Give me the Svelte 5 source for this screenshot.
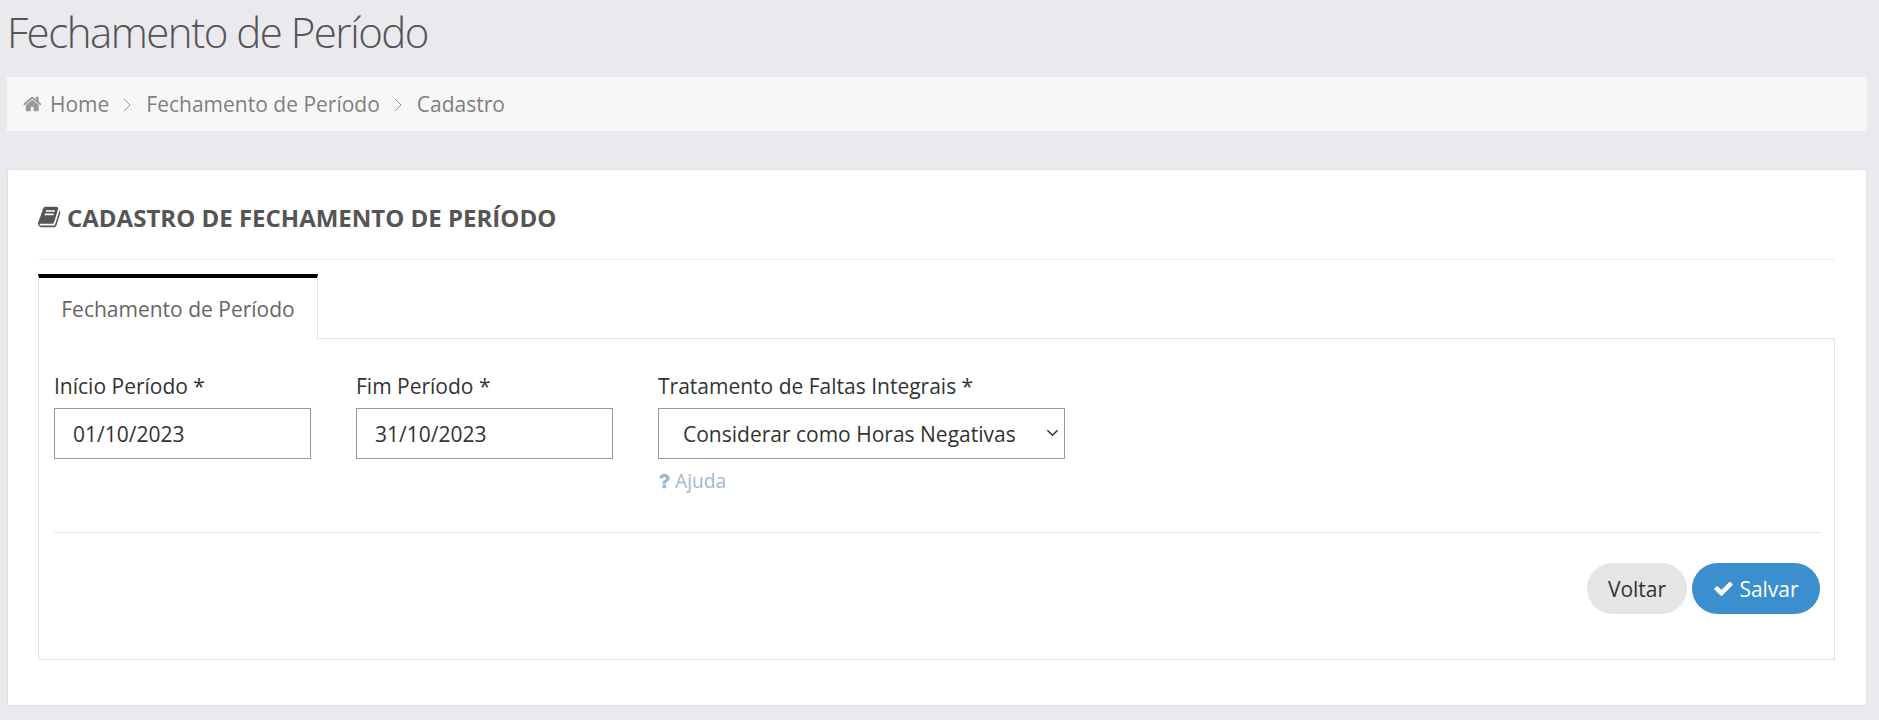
<script>
  let inicio = $state('01/10/2023');
  let fim = $state('31/10/2023');
  let tratamento = $state('negativas');
</script>

<main>
  <h1>Fechamento de Período</h1>

  <nav class="breadcrumb">
    <svg class="home" viewBox="0 0 1792 1792"><path fill="currentColor" d="M1408 992v480q0 26-19 45t-45 19h-384v-384h-256v384h-384q-26 0-45-19t-19-45v-480q0-1 .5-3t.5-3l575-474 575 474q1 2 1 6zm223-69l-62 74q-8 9-21 11h-3q-13 0-21-7l-692-577-692 577q-12 8-24 7-13-2-21-11l-62-74q-8-10-7-23.5t11-21.5l719-599q32-26 76-26t76 26l244 204v-195q0-14 9-23t23-9h192q14 0 23 9t9 23v408l219 182q10 8 11 21.5t-7 23.5z"/></svg>
    <span>Home</span>
    <svg class="sep" viewBox="0 0 8 14"><path d="M1 1l6 6-6 6" fill="none" stroke="currentColor"/></svg>
    <span>Fechamento de Período</span>
    <svg class="sep" viewBox="0 0 8 14"><path d="M1 1l6 6-6 6" fill="none" stroke="currentColor"/></svg>
    <span>Cadastro</span>
  </nav>

  <section class="card">
    <h2>
      <svg viewBox="0 0 1792 1792"><path fill="currentColor" d="M1639 478q40 57 18 129l-275 906q-19 64-76.5 107.5t-122.5 43.5h-923q-77 0-148.5-53.5t-99.5-131.5q-24-67-2-127 0-4 3-27t4-37q1-8-3-21.5t-3-19.5q2-11 8-21t16.5-23.5 16.5-23.5q23-38 45-91.5t30-91.5q3-10 .5-30t-.5-28q3-11 17-28t17-23q21-36 42-92t25-90q1-9-2.5-32t.5-28q4-13 22-30.5t22-22.5q19-26 42.5-84.5t27.5-96.5q1-8-3-25.5t-2-26.5q2-8 9-18t18-23 17-21q8-12 16.5-30.5t15-35 16-36 19.5-32 26.5-23.5 36-11.5 47.5 5.5l-1 3q38-9 51-9h761q74 0 114 56t18 130l-274 906q-36 119-71.5 153.5t-128.5 34.5h-869q-27 0-38 15-11 16-1 43 24 70 144 70h923q29 0 56-15.5t35-41.5l300-987q7-22 5-57 38 15 59 43zm-1064 2q-4 13 2 22.5t20 9.5h608q13 0 25.5-9.5t16.5-22.5l21-64q4-13-2-22.5t-20-9.5h-608q-13 0-25.5 9.5t-16.5 22.5zm-83 256q-4 13 2 22.5t20 9.5h608q13 0 25.5-9.5t16.5-22.5l21-64q4-13-2-22.5t-20-9.5h-608q-13 0-25.5 9.5t-16.5 22.5z"/></svg>
      CADASTRO DE FECHAMENTO DE PERÍODO
    </h2>

    <div class="tabs">
      <button type="button" class="tab">Fechamento de Período</button>
    </div>

    <form class="panel" onsubmit={(e) => e.preventDefault()}>
      <div class="fields">
        <div class="field small">
          <label for="inicio">Início Período *</label>
          <input id="inicio" type="text" bind:value={inicio} />
        </div>
        <div class="field small">
          <label for="fim">Fim Período *</label>
          <input id="fim" type="text" bind:value={fim} />
        </div>
        <div class="field wide">
          <label for="tratamento">Tratamento de Faltas Integrais *</label>
          <div class="select-wrap">
            <select id="tratamento" bind:value={tratamento}>
              <option value="negativas">Considerar como Horas Negativas</option>
            </select>
            <svg class="chevron" viewBox="0 0 14 8"><path d="M1.5 1l5.5 5.5L12.5 1" fill="none" stroke="currentColor" stroke-width="1.6"/></svg>
          </div>
          <a href="#ajuda" class="help">
            <svg viewBox="0 0 1792 1792"><path fill="currentColor" d="M1088 1256v240q0 16-12 28t-28 12h-240q-16 0-28-12t-12-28v-240q0-16 12-28t28-12h240q16 0 28 12t12 28zm316-600q0 54-15.5 101t-35 76.5-55 59.5-57.5 43.5-61 35.5q-41 23-68.5 65t-27.5 67q0 17-12 32.5t-28 15.5h-240q-15 0-25.5-18.5t-10.5-37.5v-45q0-83 65-156.5t143-108.5q59-27 84-56t25-76q0-42-46.5-74t-107.5-32q-65 0-108 29-35 25-107 115-13 16-31 16-12 0-25-8l-164-125q-13-10-15.5-25t5.5-28q160-266 464-266 80 0 161 31t146 83 106 127.5 41 158.5z"/></svg>
            Ajuda
          </a>
        </div>
      </div>

      <div class="actions">
        <button type="button" class="btn back">Voltar</button>
        <button type="submit" class="btn save">
          <svg viewBox="0 0 1792 1792"><path fill="currentColor" d="M1671 566q0 40-28 68l-724 724-136 136q-28 28-68 28t-68-28l-136-136-362-362q-28-28-28-68t28-68l136-136q28-28 68-28t68 28l294 295 656-657q28-28 68-28t68 28l136 136q28 28 28 68z"/></svg>
          Salvar
        </button>
      </div>
    </form>
  </section>
</main>

<style>
  :global(body) {
    background-color: #e9e9ee;
    font-family: "Open Sans", sans-serif;
    color: #333;
  }

  main {
    padding: 0 12px 0 7px;
  }

  h1 {
    margin: 0;
    padding-top: 7px;
    height: 77px;
    box-sizing: border-box;
    font-size: 42px;
    line-height: 50px;
    font-weight: 300;
    letter-spacing: -1.5px;
    color: #555;
  }

  .breadcrumb {
    display: flex;
    align-items: center;
    height: 54px;
    margin-bottom: 38px;
    padding-left: 16px;
    background-color: #f7f7f7;
    font-size: 21px;
    color: #808080;
  }

  .home {
    width: 20px;
    height: 20px;
    margin-right: 7px;
    color: #999;
  }

  .sep {
    width: 8px;
    height: 14px;
    margin: 1px 15px 0 14px;
    color: #999;
  }

  .card {
    height: 537px;
    box-sizing: border-box;
    padding: 0 31px 0 30px;
    background-color: #fff;
    border: 1px solid #e2e2e2;
  }

  h2 {
    display: flex;
    align-items: center;
    gap: 5px;
    height: 90px;
    margin: 0;
    padding-top: 5px;
    box-sizing: border-box;
    border-bottom: 1px solid #eee;
    font-size: 24px;
    font-weight: 700;
    color: #555;
  }

  h2 svg {
    width: 24px;
    height: 24px;
  }

  .tabs {
    display: flex;
    margin-top: 14px;
    height: 64px;
  }

  .tab {
    width: 280px;
    height: 65px;
    padding: 0;
    position: relative;
    z-index: 1;
    background-color: #fff;
    border: 0;
    border-top: 4px solid #000;
    border-left: 1px solid #e2e2e2;
    border-right: 1px solid #e2e2e2;
    font-family: inherit;
    font-size: 21px;
    color: #666;
  }

  .panel {
    height: 322px;
    box-sizing: border-box;
    padding: 31px 14px 0 15px;
    background-color: #fff;
    border: 1px solid #e2e2e2;
  }

  .fields {
    display: flex;
    gap: 45px;
    height: 162px;
    border-bottom: 1px solid #e6e6e6;
  }

  .field.small {
    width: 257px;
  }

  .field.wide {
    width: 407px;
  }

  label {
    display: block;
    height: 38px;
    font-size: 21px;
    line-height: 32px;
  }

  input,
  select {
    display: block;
    width: 100%;
    height: 51px;
    box-sizing: border-box;
    background-color: #fff;
    border: 1px solid #999;
    border-radius: 0;
    font-family: inherit;
    font-size: 21px;
    color: #333;
    outline: none;
  }

  input {
    padding: 0 18px;
  }

  select {
    appearance: none;
    padding: 0 24px;
  }

  .select-wrap {
    position: relative;
  }

  .chevron {
    position: absolute;
    top: 21px;
    right: 6px;
    width: 13px;
    height: 8px;
    color: #333;
    pointer-events: none;
  }

  .help {
    display: flex;
    align-items: center;
    gap: 1px;
    margin-top: 10px;
    margin-left: -4px;
    font-size: 19.2px;
    line-height: 24px;
    color: #9fb7d0;
    text-decoration: none;
  }

  .help svg {
    width: 20px;
    height: 20px;
  }

  .actions {
    display: flex;
    justify-content: flex-end;
    gap: 5px;
    margin-top: 30px;
  }

  .btn {
    display: flex;
    align-items: center;
    gap: 5px;
    height: 51px;
    padding: 0 20px;
    border: 0;
    border-radius: 26px;
    font-family: inherit;
    font-size: 21px;
    cursor: pointer;
  }

  .back {
    width: 100px;
    justify-content: center;
    background-color: #e5e5e5;
    color: #333;
  }

  .save {
    width: 128px;
    justify-content: center;
    padding: 0;
    background-color: #3c8fcf;
    color: #fff;
  }

  .save svg {
    width: 21px;
    height: 21px;
  }
</style>
